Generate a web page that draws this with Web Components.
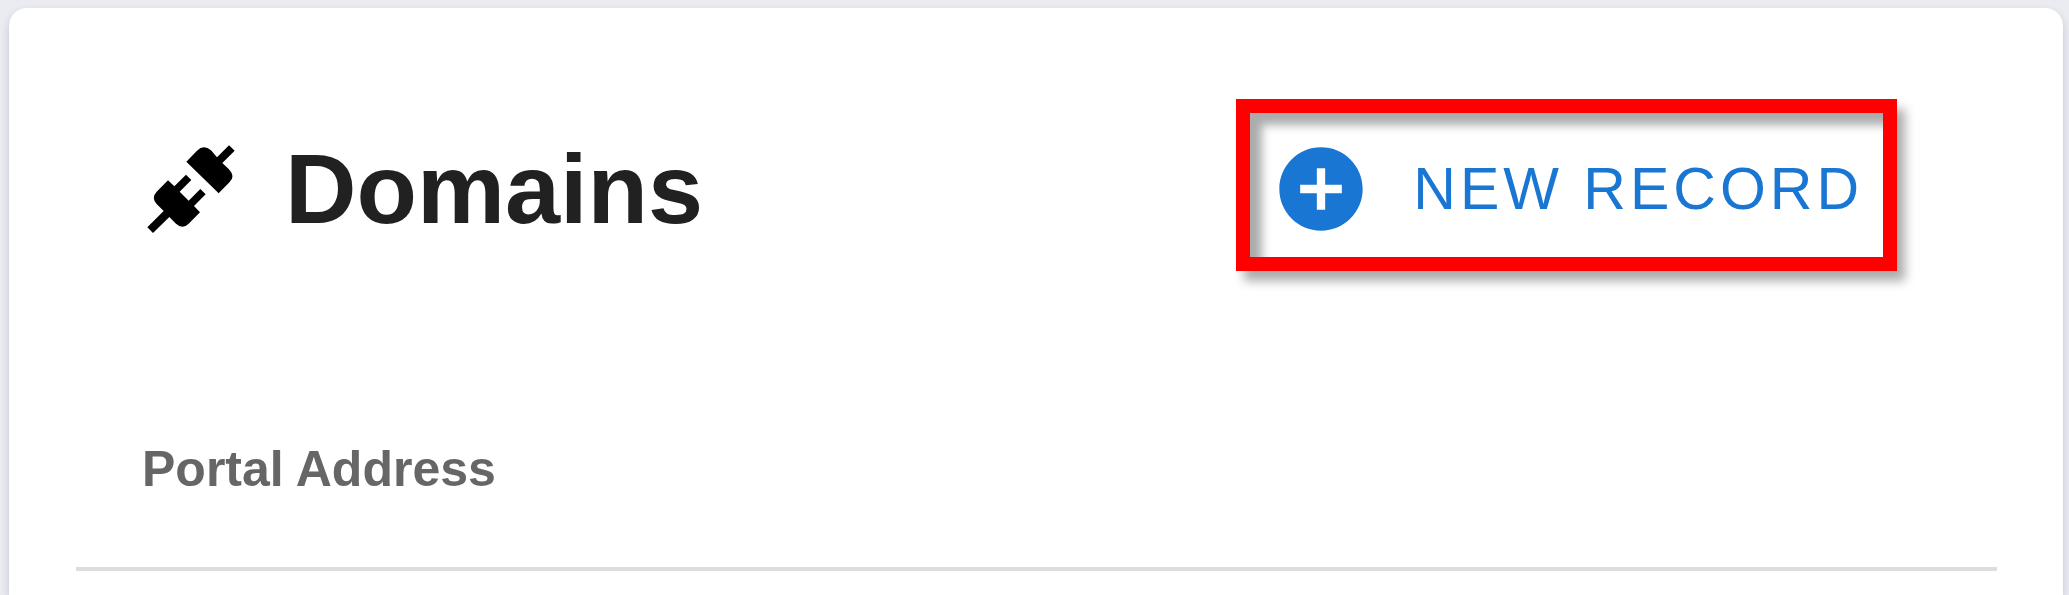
<!DOCTYPE html>
<html lang="en">
<head>
<meta charset="utf-8">
<title>Domains</title>
<style>
  html, body { margin: 0; height: 100%; }
  body {
    background: #ebecf2;
    font-family: "Liberation Sans", Arial, sans-serif;
    overflow: hidden;
  }
</style>
</head>
<body>
<domains-page></domains-page>

<script>
class BaseElement extends HTMLElement {
  connectedCallback() {
    if (this.shadowRoot) return;
    this.attachShadow({ mode: "open" }).innerHTML = this.constructor.markup;
  }
}

customElements.define("plug-icon", class extends BaseElement {
  static markup = `
    <style>
      :host { display: block; flex: none; width: 88px; height: 88px; }
      svg { display: block; width: 100%; height: 100%; }
    </style>
    <svg viewBox="51 45 264 264" fill="#000" aria-hidden="true">
      <path d="M169 95 L201 62 Q221 42 243 61 L261 82 L297 46 L314 62 L277 99 L296 117 Q317 139 299 156 L266 190Z"/>
      <path d="M114 151 L133 169 L168 134 L184 150 L149 185 L176 212 L211 177 L227 193 L192 228 L210 247 L176 281 Q158 299 138 281 L118 261 L69 309 L52 292 L101 243 L80 222 Q63 203 80 185Z"/>
    </svg>`;
});

customElements.define("add-button", class extends BaseElement {
  static markup = `
    <style>
      :host { display: block; flex: none; }
      button {
        display: flex; align-items: center; gap: 42px;
        margin: 0; padding: 0; border: 0; background: none;
        color: #1976d2; font: 59px/100px "Liberation Sans", Arial, sans-serif;
        letter-spacing: 4px; white-space: nowrap; cursor: pointer;
      }
      svg { display: block; width: 100px; height: 100px; }
    </style>
    <button type="button">
      <svg viewBox="0 0 24 24" fill="currentColor" aria-hidden="true">
        <path d="M12 2C6.48 2 2 6.48 2 12s4.48 10 10 10 10-4.48 10-10S17.52 2 12 2zm5 11h-4v4h-2v-4H7v-2h4V7h2v4h4v2z"/>
      </svg>
      <slot></slot>
    </button>`;
});

/* Red callout drawn over and around the slotted control. */
customElements.define("callout-frame", class extends BaseElement {
  static markup = `
    <style>
      :host { display: block; flex: none; position: relative; }
      .frame {
        position: absolute; inset: -40px -34px -32px -35px;
        border: 14px solid #f00; pointer-events: none;
        box-shadow: 8px 10px 10px rgba(0,0,0,.33), inset 12px 12px 10px rgba(0,0,0,.33);
      }
    </style>
    <div class="frame"></div>
    <slot></slot>`;
});

customElements.define("card-header", class extends BaseElement {
  static markup = `
    <style>
      :host { display: flex; align-items: center; padding: 0 134px 0 71px; }
      h1 {
        flex: 1; margin: 0 0 0 50px; color: #212121;
        font-size: 99px; line-height: 100px; font-weight: 700;
      }
    </style>
    <plug-icon></plug-icon>
    <h1><slot></slot></h1>
    <slot name="action"></slot>`;
});

customElements.define("domain-table", class extends BaseElement {
  static markup = `
    <style>
      :host { display: block; margin-top: 132px; }
      table { width: 100%; border-collapse: separate; border-spacing: 0; }
      th {
        padding: 68px 66px; text-align: left; color: #666;
        font-size: 50px; line-height: 60px; font-weight: 700;
        border-bottom: 4px solid #ddd;
      }
    </style>
    <table><thead><tr><th scope="col">Portal Address</th></tr></thead></table>`;
});

customElements.define("domains-page", class extends BaseElement {
  static markup = `
    <style>
      :host { display: flex; box-sizing: border-box; min-height: 100%; padding: 8px 6px 0 9px; }
      main {
        flex: 1; padding: 131px 66px 0 67px; background: #fff;
        border-radius: 18px 18px 0 0;
        box-shadow: 0 4px 8px rgba(40,40,70,.2);
      }
    </style>
    <main>
      <card-header>
        Domains
        <callout-frame slot="action"><add-button>NEW RECORD</add-button></callout-frame>
      </card-header>
      <domain-table></domain-table>
    </main>`;
});
</script>
</body>
</html>
